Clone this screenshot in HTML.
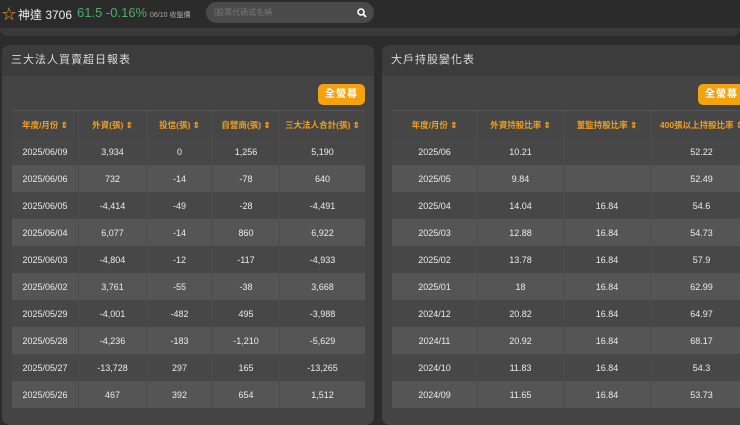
<!DOCTYPE html><html><head><meta charset="utf-8"><style>
body{margin:0;width:740px;height:409px;overflow:hidden;background:#2c2c2c;font-family:"Liberation Sans","Noto Sans CJK TC",sans-serif;position:relative}
.top{position:absolute;left:0;top:0;width:740px;height:28px;background:#2b2b2b}
.strip{position:absolute;left:0;top:28px;width:740px;height:8px;background:#3a3a3a;border-radius:0 0 8px 8px}
.panel{position:absolute;top:45px;height:380px;background:#444;border-radius:8px;overflow:hidden}
.ph{height:31px;background:#3c3c3c;color:#ddd;font-size:11px;line-height:31px;padding-left:9px;letter-spacing:1px}
.btn{position:absolute;top:39px;width:47px;height:21px;background:#f5a20f;border-radius:5px;color:#fff;font-size:10px;line-height:21px;text-align:center;font-weight:bold;letter-spacing:1px}
table{position:absolute;top:65px;border-collapse:collapse;font-size:9px;color:#ececec}
td,th{text-align:center;height:27px;padding:0;border-left:1px solid #4c4c4c}
th{color:#f0a020;font-weight:bold;font-size:8.5px;border-top:1px solid #555;background:#464646}
tr:nth-child(odd) td{background:#555}
tr td{background:#474747}
td:first-child,th:first-child{border-left:none}
</style></head><body>
<div class="top"></div>
<div style="position:absolute;left:2px;top:4px;color:#f5a20f;font-size:14px">☆</div>
<div style="position:absolute;left:18px;top:6px;color:#eee;font-size:12px;white-space:nowrap">神達 3706</div>
<div style="position:absolute;left:77px;top:5px;color:#4caf6a;font-size:13px;white-space:nowrap">61.5 -0.16%</div>
<div style="position:absolute;left:150px;top:10px;color:#aaa;font-size:7px;white-space:nowrap">06/10 收盤價</div>
<div style="position:absolute;left:206px;top:2px;width:168px;height:21px;background:#4a4a4a;border-radius:11px"></div>
<div style="position:absolute;left:214px;top:7px;color:#777;font-size:8px">|股票代碼或名稱</div>
<svg style="position:absolute;left:357px;top:8px" width="10" height="10"><circle cx="4" cy="4" r="3" stroke="#fff" stroke-width="1.6" fill="none"/><line x1="6.3" y1="6.3" x2="9" y2="9" stroke="#fff" stroke-width="1.8"/></svg>
<div class="strip"></div>
<div class="panel" style="left:2px;width:372px">
<div class="ph">三大法人買賣超日報表</div>
<div class="btn" style="left:316px">全螢幕</div>
<table style="left:10px;width:353px">
<tr><th style="width:66px">年度/月份 ⇕</th><th style="width:67px">外資(張) ⇕</th><th style="width:65px">投信(張) ⇕</th><th style="width:66px">自營商(張) ⇕</th><th>三大法人合計(張) ⇕</th></tr>
<tr><td>2025/06/09</td><td>3,934</td><td>0</td><td>1,256</td><td>5,190</td></tr>
<tr><td>2025/06/06</td><td>732</td><td>-14</td><td>-78</td><td>640</td></tr>
<tr><td>2025/06/05</td><td>-4,414</td><td>-49</td><td>-28</td><td>-4,491</td></tr>
<tr><td>2025/06/04</td><td>6,077</td><td>-14</td><td>860</td><td>6,922</td></tr>
<tr><td>2025/06/03</td><td>-4,804</td><td>-12</td><td>-117</td><td>-4,933</td></tr>
<tr><td>2025/06/02</td><td>3,761</td><td>-55</td><td>-38</td><td>3,668</td></tr>
<tr><td>2025/05/29</td><td>-4,001</td><td>-482</td><td>495</td><td>-3,988</td></tr>
<tr><td>2025/05/28</td><td>-4,236</td><td>-183</td><td>-1,210</td><td>-5,629</td></tr>
<tr><td>2025/05/27</td><td>-13,728</td><td>297</td><td>165</td><td>-13,265</td></tr>
<tr><td>2025/05/26</td><td>467</td><td>392</td><td>654</td><td>1,512</td></tr>
</table></div>
<div class="panel" style="left:382px;width:370px">
<div class="ph">大戶持股變化表</div>
<div class="btn" style="left:316px">全螢幕</div>
<table style="left:10px;width:360px">
<tr><th style="width:85px">年度/月份 ⇕</th><th style="width:85px">外資持股比率 ⇕</th><th style="width:86px">董監持股比率 ⇕</th><th>400張以上持股比率 ⇕</th></tr>
<tr><td>2025/06</td><td>10.21</td><td></td><td>52.22</td></tr>
<tr><td>2025/05</td><td>9.84</td><td></td><td>52.49</td></tr>
<tr><td>2025/04</td><td>14.04</td><td>16.84</td><td>54.6</td></tr>
<tr><td>2025/03</td><td>12.88</td><td>16.84</td><td>54.73</td></tr>
<tr><td>2025/02</td><td>13.78</td><td>16.84</td><td>57.9</td></tr>
<tr><td>2025/01</td><td>18</td><td>16.84</td><td>62.99</td></tr>
<tr><td>2024/12</td><td>20.82</td><td>16.84</td><td>64.97</td></tr>
<tr><td>2024/11</td><td>20.92</td><td>16.84</td><td>68.17</td></tr>
<tr><td>2024/10</td><td>11.83</td><td>16.84</td><td>54.3</td></tr>
<tr><td>2024/09</td><td>11.65</td><td>16.84</td><td>53.73</td></tr>
</table></div>
</body></html>
